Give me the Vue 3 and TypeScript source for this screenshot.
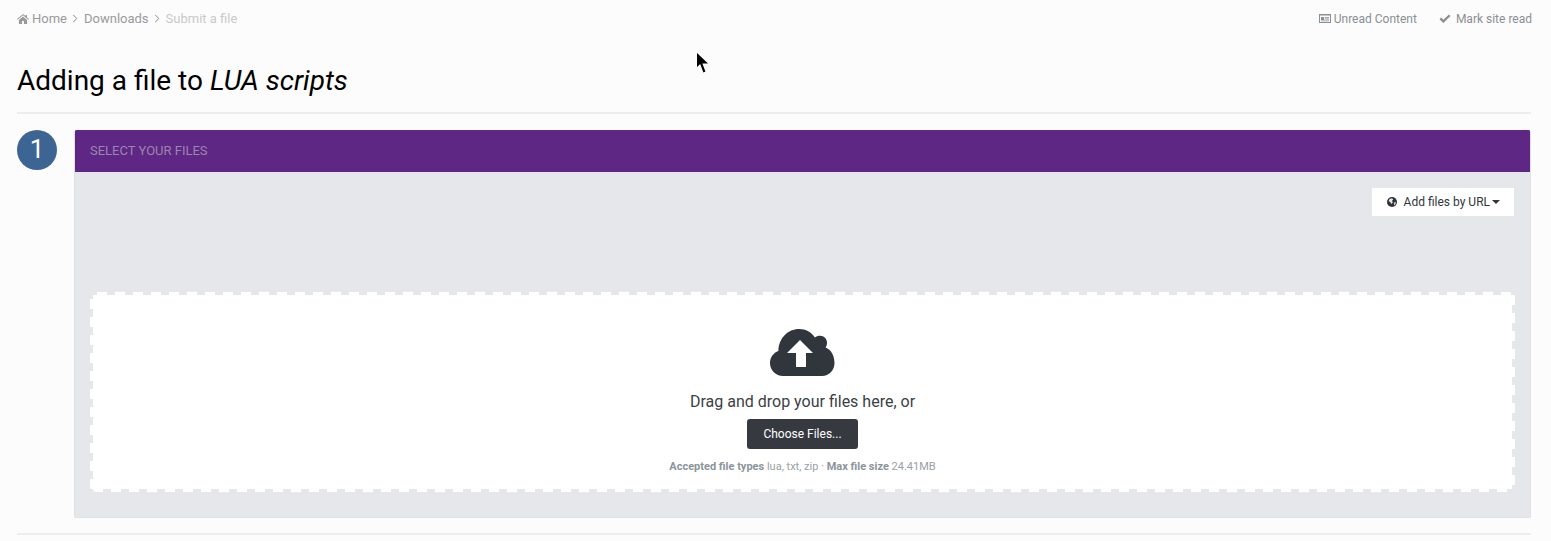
<script setup lang="ts">
const accepted = "lua, txt, zip";
const maxSize = "24.41MB";
</script>

<template>
  <div class="page">
    <svg class="cursor" width="12" height="20" viewBox="0 0 12 20"><path d="M0 0V14L3.2 11L6.4 19.5L8.4 18.6L5.4 10.6H11Z" fill="#000" /></svg>
    <div class="topbar">
      <nav class="crumbs">
        <svg class="ic-home" viewBox="0 0 13 11" width="12" height="10"><path d="M6.5 0L0 5.6l.7.8L6.5 1.5l5.8 4.9.7-.8-2.2-1.9V1h-1.6v1.3zM2 6.6V11h3.4V7.6h2.2V11H11V6.6L6.5 2.8z" fill="#9a9a9a"/></svg>
        <span class="crumb">Home</span>
        <svg class="chev" viewBox="0 0 6 10" width="6" height="9"><path d="M1 1l4 4-4 4" fill="none" stroke="#888" stroke-width="1.1"/></svg>
        <span class="crumb">Downloads</span>
        <svg class="chev" viewBox="0 0 6 10" width="6" height="9"><path d="M1 1l4 4-4 4" fill="none" stroke="#888" stroke-width="1.1"/></svg>
        <span class="crumb current">Submit a file</span>
      </nav>
      <div class="actions">
        <span class="act">
          <svg viewBox="0 0 12 9" width="12" height="9"><path fill-rule="evenodd" d="M0 0h12v9H0zM1 1.6v6.4h10V1.6zM2 3h3.2v3H2zM6 3h4v.8H6zM6 4.6h4v.8H6zM2 6.6h8v.7H2z" fill="#8a8f94"/></svg>
          Unread Content
        </span>
        <span class="act mark">
          <svg viewBox="0 0 12 9" width="12" height="9"><path d="M1.3 4.4L4.4 7.4 10.7 1.2" fill="none" stroke="#8a8f94" stroke-width="2.3"/></svg>
          Mark site read
        </span>
      </div>
    </div>

    <h1 class="title">Adding a file to <em>LUA scripts</em></h1>

    <div class="step">
      <div class="badge">1</div>
      <section class="panel">
        <header class="panel-head">SELECT YOUR FILES</header>
        <div class="panel-body">
          <div class="url-row">
            <button class="url-btn" type="button">
              <svg viewBox="0 0 12 12" width="10" height="10"><circle cx="6" cy="6" r="6" fill="#2f3338"/><path d="M3 2.5L6 1.5l1.5 1.5-1.5 1.5 1 2-2 2L4 6 2 5zM8.5 6.5l2-.5-.5 3-1.5 1z" fill="#e8e8e8"/></svg>
              <span>Add files by URL</span>
              <i class="caret"></i>
            </button>
          </div>
          <div class="drop">
            <svg class="cloud" viewBox="0 0 65 48" width="65" height="48">
              <path fill-rule="evenodd" fill="#31363c" d="M13 48C5.8 48 0 42.2 0 35 0 29.5 3.4 24.8 8.4 23 8.6 10 18 1 29 1 36 1 41.5 4.2 45 9.6 46.2 8.4 48 7.8 50 7.8 54.2 7.8 57 11 57 14.8 57 16.6 56.6 18 55.6 19.4 61 21.4 64.5 27.6 64.5 35 64.5 42.2 59 48 52 48Z M30 12L17 25h9V39h10V25h7Z"/>
            </svg>
            <p class="drop-text">Drag and drop your files here, or</p>
            <button class="choose" type="button">Choose Files...</button>
            <p class="meta"><strong>Accepted file types</strong> {{ accepted }} · <strong>Max file size</strong> {{ maxSize }}</p>
          </div>
        </div>
      </section>
    </div>
    <hr class="rule" />
  </div>
</template>

<style>
html, body { margin: 0; background: #fcfcfc; }
</style>

<style scoped>
.page {
  position: relative;
  height: 541px;
  box-sizing: border-box;
  padding: 0 20px 0 17px;
  overflow: hidden;
  font-family: Roboto, "Liberation Sans", sans-serif;
  background: #fcfcfc;
}
.cursor { position: absolute; left: 697px; top: 53px; }
.topbar { display: flex; justify-content: space-between; height: 36px; padding-top: 11px; box-sizing: border-box; font-size: 13px; }
.crumbs { display: flex; align-items: center; height: 15px; color: #9a9a9a; }
.ic-home { margin-right: 3px; }
.chev { margin: 0 5.5px; }
.current { color: #c9c9c9; }
.actions { display: flex; font-size: 12px; color: #8a8f94; height: 15px; align-items: center; margin-right: -1px; }
.act { display: flex; align-items: center; gap: 3px; }
.mark { margin-left: 22px; gap: 5px; }
.title { margin: 0; padding-top: 27px; height: 78px; box-sizing: border-box; font-size: 28px; line-height: 36px; font-weight: 400; color: #000; border-bottom: 2px solid #eceded; }
.title em { font-style: italic; }
.step { display: flex; gap: 17px; margin-top: 16px; }
.badge { flex: none; width: 40px; height: 40px; border-radius: 50%; background: #3d6594; color: #fff; font-size: 26px; line-height: 38px; text-align: center; }
.panel { flex: 1; border-radius: 2px; overflow: hidden; border: 1px solid #dfe0e3; border-top: 0; background: #e6e7eb; height: 388px; box-sizing: border-box; }
.panel-head { height: 42px; padding: 0 15px; background: #5e2784; color: #9c84b0; font-size: 13px; line-height: 42px; }
.panel-body { padding: 16px 15px 0 15px; }
.url-row { display: flex; justify-content: flex-end; margin-right: 1px; }
.url-btn { display: flex; align-items: center; gap: 6px; height: 28px; padding: 0 14px 0 15px; border: 0; background: #fff; color: #32363b; font-family: inherit; font-size: 12px; }
.url-btn svg { margin-right: 1px; }
.caret { width: 0; height: 0; margin-left: -4px; border: 4px solid transparent; border-top-color: #32363b; border-bottom: 0; }
.drop {
  margin-top: 76px;
  height: 200px;
  box-sizing: border-box;
  border-radius: 6px;
  display: flex;
  flex-direction: column;
  align-items: center;
  padding-top: 36px;
  background-color: #fff;
  background-image:
    repeating-linear-gradient(90deg, #e6e7eb 0 7px, #fff 7px 17px, #e6e7eb 17px 18px),
    repeating-linear-gradient(90deg, #e6e7eb 0 3px, #fff 3px 13px, #e6e7eb 13px 18px),
    repeating-linear-gradient(180deg, #e6e7eb 0 7px, #fff 7px 17px, #e6e7eb 17px 18px),
    repeating-linear-gradient(180deg, #e6e7eb 0 3px, #fff 3px 13px, #e6e7eb 13px 18px);
  background-size: 100% 3px, 100% 3px, 3px 100%, 3px 100%;
  background-position: top left, bottom left, top left, top right;
  background-repeat: no-repeat;
}
.cloud { display: block; }
.drop-text { margin: 16px 0 0; font-size: 16px; line-height: 20px; color: #3a3f45; }
.choose { margin-top: 7px; width: 111px; height: 30px; border: 0; border-radius: 3px; background: #363a40; color: #fff; font-family: inherit; font-size: 12px; }
.meta { margin: 11px 0 0; font-size: 11px; line-height: 14px; color: #99a0a6; }
.meta strong { font-weight: 700; color: #8c949b; }
.rule { border: 0; height: 2px; background: #eceded; margin: 15px 0 0; }
</style>
